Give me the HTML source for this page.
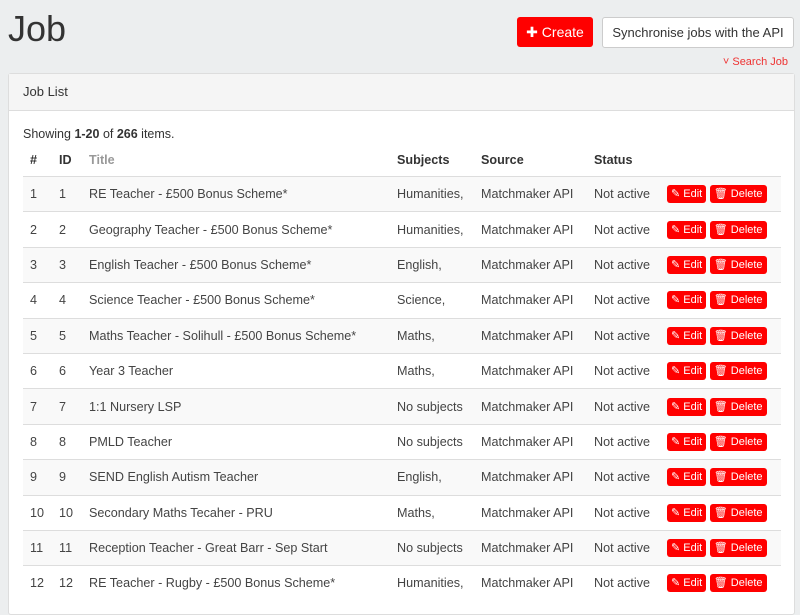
<!DOCTYPE html>
<html><head><style>
body{margin:0;background:#eceeef;font-family:"Liberation Sans",sans-serif;color:#333;width:800px;height:598px;overflow:hidden;position:relative}
h1{position:absolute;left:8px;top:8px;margin:0;font-size:36px;font-weight:400;color:#333}
.create{position:absolute;left:517px;top:17px;width:76px;height:30px;background:#f00;border-radius:3px;color:#fff;font-size:14px;line-height:30px;text-align:center}
.sync{position:absolute;left:602px;top:17px;width:190px;height:29px;background:#fff;border:1px solid #ccc;border-radius:3px;font-size:13px;line-height:29px;text-align:center}
.search{position:absolute;right:12px;top:56px;font-size:11px;color:#e33}
.panel{position:absolute;left:8px;top:73px;width:785px;height:540px;background:#fff;border:1px solid #ddd;border-radius:3px}
.ph{height:36px;background:#f5f5f5;border-bottom:1px solid #ddd;font-size:13px;line-height:36px;padding-left:14px}
.show{position:absolute;left:14px;top:53px;font-size:12.5px}
table{position:absolute;left:14px;top:70px;width:758px;border-collapse:collapse;font-size:12.6px}
th{text-align:left;height:32px;padding:0 0 0 7px;font-weight:bold;color:#333}
th.t{color:#999}
td{height:34.4px;padding:0 0 0 7px;border-top:1px solid #ddd;color:#444}
tr:nth-child(even) td{background:#f9f9f9}
.b{display:inline-block;background:#f00;color:#fff;border-radius:3px;font-size:11px;height:18px;line-height:18px;padding:0 4px}
</style></head><body>
<h1>Job</h1>
<div class="create">✚ Create</div>
<div class="sync">Synchronise jobs with the API</div>
<div class="search">˅ Search Job</div>
<div class="panel"><div class="ph">Job List</div>
<div class="show">Showing <b>1-20</b> of <b>266</b> items.</div>
<table>
<tr><th style="width:22px">#</th><th style="width:23px">ID</th><th class="t" style="width:301px">Title</th><th style="width:77px">Subjects</th><th style="width:106px">Source</th><th style="width:66px">Status</th><th></th></tr>
<tr><td>1</td><td>1</td><td>RE Teacher - £500 Bonus Scheme*</td><td>Humanities,</td><td>Matchmaker API</td><td>Not active</td><td><span class="b">✎ Edit</span> <span class="b">🗑 Delete</span></td></tr>
<tr><td>2</td><td>2</td><td>Geography Teacher - £500 Bonus Scheme*</td><td>Humanities,</td><td>Matchmaker API</td><td>Not active</td><td><span class="b">✎ Edit</span> <span class="b">🗑 Delete</span></td></tr>
<tr><td>3</td><td>3</td><td>English Teacher - £500 Bonus Scheme*</td><td>English,</td><td>Matchmaker API</td><td>Not active</td><td><span class="b">✎ Edit</span> <span class="b">🗑 Delete</span></td></tr>
<tr><td>4</td><td>4</td><td>Science Teacher - £500 Bonus Scheme*</td><td>Science,</td><td>Matchmaker API</td><td>Not active</td><td><span class="b">✎ Edit</span> <span class="b">🗑 Delete</span></td></tr>
<tr><td>5</td><td>5</td><td>Maths Teacher - Solihull - £500 Bonus Scheme*</td><td>Maths,</td><td>Matchmaker API</td><td>Not active</td><td><span class="b">✎ Edit</span> <span class="b">🗑 Delete</span></td></tr>
<tr><td>6</td><td>6</td><td>Year 3 Teacher</td><td>Maths,</td><td>Matchmaker API</td><td>Not active</td><td><span class="b">✎ Edit</span> <span class="b">🗑 Delete</span></td></tr>
<tr><td>7</td><td>7</td><td>1:1 Nursery LSP</td><td>No subjects</td><td>Matchmaker API</td><td>Not active</td><td><span class="b">✎ Edit</span> <span class="b">🗑 Delete</span></td></tr>
<tr><td>8</td><td>8</td><td>PMLD Teacher</td><td>No subjects</td><td>Matchmaker API</td><td>Not active</td><td><span class="b">✎ Edit</span> <span class="b">🗑 Delete</span></td></tr>
<tr><td>9</td><td>9</td><td>SEND English Autism Teacher</td><td>English,</td><td>Matchmaker API</td><td>Not active</td><td><span class="b">✎ Edit</span> <span class="b">🗑 Delete</span></td></tr>
<tr><td>10</td><td>10</td><td>Secondary Maths Tecaher - PRU</td><td>Maths,</td><td>Matchmaker API</td><td>Not active</td><td><span class="b">✎ Edit</span> <span class="b">🗑 Delete</span></td></tr>
<tr><td>11</td><td>11</td><td>Reception Teacher - Great Barr - Sep Start</td><td>No subjects</td><td>Matchmaker API</td><td>Not active</td><td><span class="b">✎ Edit</span> <span class="b">🗑 Delete</span></td></tr>
<tr><td>12</td><td>12</td><td>RE Teacher - Rugby - £500 Bonus Scheme*</td><td>Humanities,</td><td>Matchmaker API</td><td>Not active</td><td><span class="b">✎ Edit</span> <span class="b">🗑 Delete</span></td></tr>
</table></div>
</body></html>
